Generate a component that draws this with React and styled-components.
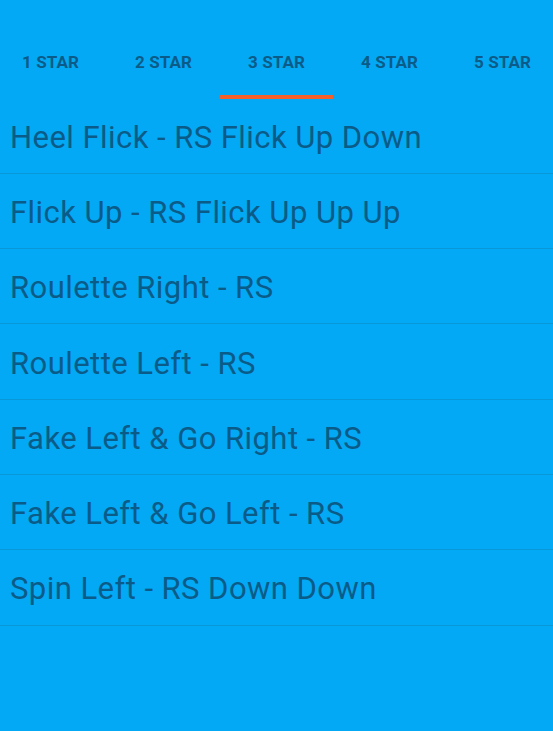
import React from "react";
import styled, { createGlobalStyle } from "styled-components";

const GlobalStyle = createGlobalStyle`
  html, body {
    margin: 0;
    padding: 0;
    background: #03a9f4;
  }
  body {
    font-family: Roboto, "Noto Sans", sans-serif;
  }
`;

const tabs = ["1 STAR", "2 STAR", "3 STAR", "4 STAR", "5 STAR"];

const moves = [
  "Heel Flick - RS Flick Up Down",
  "Flick Up - RS Flick Up Up Up",
  "Roulette Right - RS",
  "Roulette Left - RS",
  "Fake Left & Go Right - RS",
  "Fake Left & Go Left - RS",
  "Spin Left - RS Down Down",
];

const Screen = styled.div`
  width: 553px;
  height: 731px;
  background: #03a9f4;
  overflow: hidden;
`;

const TabBar = styled.div`
  display: grid;
  grid-template-columns: repeat(5, 113px);
  justify-content: center;
  padding-top: 44px;
`;

const Tab = styled.div`
  display: flex;
  flex-direction: column;
  align-items: center;
  font-weight: 700;
  font-size: 17px;
  color: #0a5b87;
  letter-spacing: 0.1px;

  span {
    height: 37px;
    line-height: 37px;
  }

  &::after {
    content: "";
    display: block;
    width: 100%;
    height: 4px;
    margin-top: 14px;
    background: ${(p) => (p.$active ? "#f4602a" : "transparent")};
  }
`;

const List = styled.ul`
  list-style: none;
  margin: -0.5px 0 0;
  padding: 0;
`;

const Row = styled.li`
  box-sizing: border-box;
  height: 75.3px;
  border-bottom: 1.5px solid #0898d8;
  display: flex;
  align-items: center;
  padding: 3px 0 0 10px;
  font-size: 31px;
  letter-spacing: 0.45px;
  color: #0a5b87;
`;

export default function App() {
  return (
    <>
      <GlobalStyle />
      <Screen>
        <TabBar>
          {tabs.map((t, i) => (
            <Tab key={t} $active={i === 2}>
              <span>{t}</span>
            </Tab>
          ))}
        </TabBar>
        <List>
          {moves.map((m) => (
            <Row key={m}>{m}</Row>
          ))}
        </List>
      </Screen>
    </>
  );
}
